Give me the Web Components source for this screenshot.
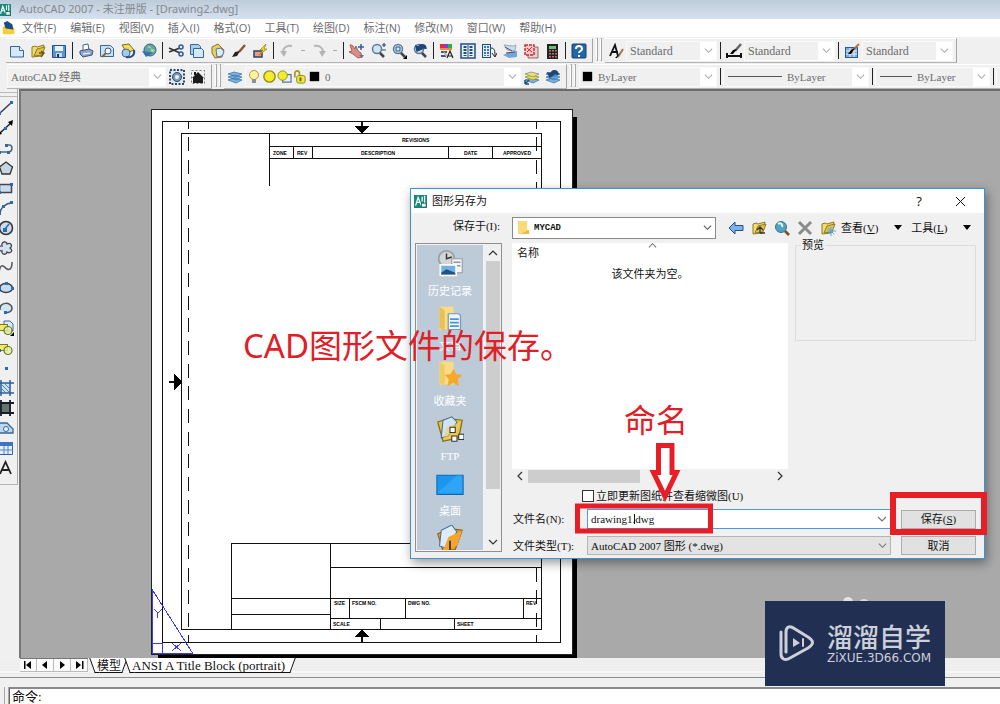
<!DOCTYPE html>
<html lang="zh-CN">
<head>
<meta charset="utf-8">
<title>AutoCAD 2007 - [Drawing2.dwg]</title>
<style>
html, body { margin: 0; height: 100%; }
body { background: #f0f0f0; font: 11px/16px "Open Sans", "Noto Sans CJK SC", sans-serif; overflow: hidden; }
</style>
</head>
<body>
<cad-app></cad-app>
<script>
const SIM = '"Liberation Serif", "Noto Sans CJK SC", serif';

/* Icons on a 16 x 16 grid */
const sheet = '<path d="M1.500 3.500h9l4 4v6.500h-13z" fill="#d5e8f7" stroke="#34689a"/><path d="M10.500 3.500v4h4" fill="#fff" stroke="#34689a"/>';
const folder = '<path d="M2 14V4l3-1 2 1 7-2-1 4-2 7z" fill="#f3dc6e" stroke="#8c7a28"/><path d="M4 13l3-7 8-2-3 8z" fill="#e2c443" stroke="#8c7a28"/>';
const layers = '<path d="M1 11l6-2 8 2-6 3zM1 8l6-2 8 2-6 3zM1 5l6-2 8 2-6 3z" fill="#7fb2dd" stroke="#2f6da6" stroke-width=".7"/>';
const lens = '<circle cx="7" cy="6" r="4.500" fill="#cfe4f5" stroke="#5b7b97" stroke-width="1.500"/><path d="M10 10l4 4" stroke="#444" stroke-width="2.500"/>';
const blocks = '<rect x="1.500" y="4.500" width="8" height="6" fill="#f2ea6a" stroke="#7c7a1c"/><circle cx="10" cy="10.500" r="4" fill="#e9efa0" fill-opacity=".8" stroke="#62782c" stroke-width="1.200"/>';
const I = {
 app: '<rect width="16" height="16" fill="#168a78"/><path d="M2 13L5 3l4 10M10 2v6M13 1v10M3 9h5" stroke="#fff" stroke-width="1.500" fill="none"/><path d="M9 10h6v5H9z" fill="#dff3ef" stroke="#0d4f46"/>',
 doc: '<path d="M1 7l6-4 7 5v6H1z" fill="#f2bd1d"/><path d="M2 2l4-2 6 4 1 8-8-1z" fill="#1e4c86"/><path d="M1 8l13 2v5H1z" fill="#f7cf38"/>',
 new: sheet,
 open: folder + '<path d="M9 10h5M11 8l3 2-3 4" stroke="#6b5a1a" stroke-width="1.500" fill="none"/>',
 save: '<path d="M1.500 2.500h13v12h-13z" fill="#5b97cf" stroke="#1f4f86"/><path d="M4 3h8v5H4z" fill="#e9f3fb"/><path d="M5 10h6v4H5z" fill="#d2dbe4"/><path d="M6 11h2v3H6z" fill="#234"/>',
 print: '<path d="M5 7V2l5-1 1 6" fill="#fff" stroke="#4d6387"/><path d="M2 8l9-2 4 2-1 4-9 2-3-3z" fill="#8fa6d2" stroke="#3f4f7d"/><path d="M5 11l7-1" stroke="#fff"/>',
 preview: '<path d="M1.500 2.500h10l3 3v8h-13z" fill="#c9dff2" stroke="#34689a"/><circle cx="9" cy="8" r="3" fill="#edf6fd" stroke="#456"/><path d="M7 10l-4 4" stroke="#8a6532" stroke-width="2"/>',
 publish: '<path d="M2 2l7-1 5 6-7 3z" fill="#f4dc54" stroke="#7a7020"/><circle cx="6" cy="10" r="4" fill="#a8c8eb" stroke="#386799"/><path d="M6 14c6 1 9-2 8-7" stroke="#284f86" stroke-width="2" fill="none"/>',
 globe: '<circle cx="9" cy="7" r="6" fill="#5fa6a6" stroke="#38677a"/><path d="M6 4c3-2 5 1 4 3s3 3 4 0" fill="#b9d98a"/><path d="M1 8l4 6 7-4-4-1z" fill="#3a6fae"/>',
 cut: '<path d="M1 5l11 5M1 9l11-4" stroke="#333" stroke-width="1.500"/><circle cx="13" cy="4" r="2" fill="none" stroke="#2b5c93" stroke-width="1.500"/><circle cx="13" cy="11" r="2" fill="none" stroke="#2b5c93" stroke-width="1.500"/>',
 copy: '<path d="M1.500 1.500h8l2 2v8h-10z" fill="#a9cdec" stroke="#34689a"/><path d="M4.500 5.500h8l2 2v7h-10z" fill="#d5e8f7" stroke="#34689a"/>',
 paste: '<path d="M2 4l6-3 6 6-2 7-7 1-3-5z" fill="#e9cf63" stroke="#87742a"/><path d="M6 6l5-1 3 4-2 4-5 1z" fill="#dcebf8" stroke="#54779a"/>',
 brush: '<path d="M14 2L8 9" stroke="#8a5a35" stroke-width="2.500"/><path d="M9 8l-3 5-5 1 3-5z" fill="#222"/>',
 blockedit: '<rect x="2" y="8" width="8" height="6" fill="#f39b73" stroke="#24467e" stroke-width="1.500"/><path d="M14 1L8 7h3l-4 5 8-6h-3z" fill="#f6dd28" stroke="#937708" stroke-width=".7"/>',
 undo: '<path d="M4 9c0-5 5-7 9-6" stroke="#b5b5b5" stroke-width="2" fill="none"/><path d="M1 8h7l-3 6z" fill="#b5b5b5"/>',
 redo: '<path d="M3 3c4-1 9 1 9 6" stroke="#b5b5b5" stroke-width="2" fill="none"/><path d="M15 8H8l3 6z" fill="#b5b5b5"/>',
 pan: '<path d="M1 2l2 0 3 4 1-3 2 5 3 2 1 4-4 1-5-4-4-2 3-1z" fill="#d98f88" stroke="#a75e5b"/><path d="M10 12l3 3 2-3z" fill="#5379a8"/><path d="M12 1v6M9 4h6" stroke="#345c94" stroke-width="1.500"/>',
 zoomrt: lens + '<path d="M12 2h4M14 0v4M12 7h4" stroke="#244e80" stroke-width="1.200"/>',
 zoomwin: lens + '<path d="M5 4h4v4H5z" fill="none" stroke="#24598f"/><path d="M16 12v4h-4z"/>',
 zoomprev: lens + '<path d="M14 6c0-5-6-6-8-1M4 3l1 5 5-2z" stroke="#1d4679" stroke-width="1.500" fill="#1d4679"/>',
 props: '<path d="M1 1h4v4H1z" fill="#e62b2b"/><path d="M5 1h4v4H5z" fill="#8a39d8"/><path d="M9 1h4v4H9z" fill="#22b53a"/><path d="M1 5h12v2H1z" fill="#f08a37"/><path d="M2 8h6v2H2zM2 12h5v2H2z" fill="#2b5a9b"/><path d="M4 7l5 6h-3z" fill="#e3a07c"/><path d="M8 15l3-7 3 7M9 13h4" stroke="#222" stroke-width="1.200" fill="none"/>',
 center: '<rect x="1" y="1" width="14" height="14" fill="#eaf3fb" stroke="#1f4c82" stroke-width="1.500"/><path d="M5 3v10M11 3v10" stroke="#1f4c82" stroke-width="3" stroke-dasharray="2 1"/><path d="M8 2v12" stroke="#1f4c82"/>',
 palettes: '<rect x="1.500" y="1.500" width="8" height="13" fill="#e2eef9" stroke="#1f4c82"/><path d="M4 3v10M7 3v10" stroke="#3f74b0" stroke-width="2" stroke-dasharray="2 1"/><path d="M10 5c4 0 4 4 4 8M11 10l3 4 2-4" stroke="#222" fill="none"/>',
 sheetset: '<path d="M2 2l9 1 3-1-1 6-8-1z" fill="#cddbe7" stroke="#7b95ac" stroke-width=".7"/><path d="M1 12l7-3 7-1v6l-8 1z" fill="#74a6cf"/><path d="M3 4l7 4M4 10l9-1" stroke="#547"/>',
 markup: '<path d="M5 4h10v11H5z" fill="#e0d2d0" stroke="#a06660"/><path d="M2 2h9v10H2z" fill="#f8caca" stroke="#c92c30" stroke-width="1.500" stroke-dasharray="3 1"/><path d="M4 9l5-5M4 5l5 4" stroke="#c92c30"/>',
 calc: '<rect x="3" y="1" width="11" height="15" fill="#232323"/><path d="M5 3h7v3H5z" fill="#6fbf7c"/><path d="M6 7v8M9 7v8M12 7v8" stroke="#e88" stroke-width="1.500" stroke-dasharray="1.500 1.500"/>',
 help: '<rect x="1" y="1" width="14" height="14" rx="1" fill="#2467a8" stroke="#153f70"/><path d="M5 6c0-4 6-4 6 0 0 2-3 2-3 4M8 12v2" stroke="#fff" stroke-width="2" fill="none"/>',
 textstyle: '<path d="M2 13L7 2l3 11M4 9h6" stroke="#111" stroke-width="1.800" fill="none"/><path d="M15 6l-5 8" stroke="#b0764a" stroke-width="2"/><path d="M12 10l-3 5-2 0z"/>',
 dimstyle: '<path d="M1 10v5M15 10v5M2 13h12" stroke="#111" stroke-width="2"/><path d="M15 1l-6 7" stroke="#666" stroke-width="2.500"/><path d="M11 6l-4 5-3 0 3-4z"/>',
 tabstyle: '<rect x="1.500" y="4.500" width="12" height="10" fill="#7ca9d8" stroke="#285c96"/><path d="M2 8h11M2 11h11M6 5v9M10 5v9" stroke="#e8f2fb"/><path d="M15 1L9 7" stroke="#b0764a" stroke-width="2"/><path d="M11 5l-4 6-3 0 3-4z"/>',
 gear: '<rect x="1" y="1" width="14" height="14" fill="#dde8f1" stroke="#30485f" stroke-width="2" stroke-dasharray="2 1.500"/><circle cx="8" cy="8" r="4.500" fill="#7d98b4" stroke="#2e4763"/><circle cx="8" cy="8" r="2" fill="#eef4f9"/>',
 home: '<rect x="1.500" y="1.500" width="13" height="13" fill="none" stroke="#777" stroke-dasharray="2 2"/><path d="M2 9l6-6 6 6h-1v5H3V9zM4 3h2v3H4z" fill="#1b1b1b"/>',
 layers: layers,
 layprev: '<path d="M1 11l6-2 8 2-6 3z" fill="#7fb2dd" stroke="#2f6da6" stroke-width=".7"/><path d="M1 8l6-2 8 2-6 3z" fill="#efe04a" stroke="#8f8420" stroke-width=".7"/><path d="M1 5l6-2 8 2-6 3z" fill="#e6dc8a" stroke="#7b8a5a" stroke-width=".7"/><path d="M5 11L1 15M1 15v-4M1 15h4" stroke="#1b4c86" fill="none" stroke-width="1.500"/>',
 laystate: layers + '<path d="M13 6c0-5-6-6-7-1M3 4l2 4 4-3z" stroke="#1d4679" stroke-width="1.500" fill="#1d4679"/>',
 bulb: '<circle cx="8" cy="6" r="4.500" fill="#fdf3a0" stroke="#b9992c"/><path d="M6 10h4v4H6z" fill="#8f8f8f"/>',
 sun: '<circle cx="8" cy="8" r="6" fill="#f3ec2c" stroke="#958c1b" stroke-width="1.500"/>',
 vpsun: '<rect x="6" y="6" width="9" height="8" fill="#eef" stroke="#456a99" stroke-width="1.200"/><circle cx="6" cy="7" r="5" fill="#f3ec2c" stroke="#958c1b"/>',
 lock: '<path d="M3 9V5c0-4 5-4 5 0v3" fill="none" stroke="#a59c16" stroke-width="1.800"/><rect x="5" y="7" width="9" height="8" rx="2" fill="#f1e933" stroke="#8b8415"/><path d="M9 9v4" stroke="#665f10" stroke-width="2"/>',
 line: '<path d="M1 14L14 2" stroke="#345" stroke-width="1.500"/><path d="M0 12h3v3H0zM12 1h3v3h-3z" fill="#2a6ab0"/>',
 xline: '<path d="M1 14L14 2" stroke="#222" stroke-width="1.500"/><path d="M15 0l-1 6-4-4zM0 15l1-5 3 4z"/><path d="M6 7h3v3H6z" fill="#2a6ab0"/>',
 pline: '<path d="M1 12h10c4-1 4-7 0-7H8" fill="none" stroke="#567" stroke-width="1.500"/><path d="M0 11h3v3H0zM7 4h3v3H7zM9 11h3v3H9z" fill="#2a6ab0"/>',
 polygon: '<path d="M8 2l6.500 5-2.500 7H4L1.500 7z" fill="#c4d6e4" stroke="#333" stroke-width="1.300"/>',
 rect: '<path d="M1.500 4.500h12v8h-12z" fill="#c9dcec" stroke="#445" stroke-width="1.500"/><path d="M0 11h3v3H0zM12 3h3v3h-3z" fill="#2a6ab0"/>',
 arc: '<path d="M2 14C2 8 8 3 14 3" fill="none" stroke="#456" stroke-width="1.500"/><path d="M0 12h3v3H0zM4 5h3v3H4zM12 1h3v3h-3z" fill="#2a6ab0"/>',
 circle: '<circle cx="8" cy="8" r="6.500" fill="#cbddea" stroke="#333" stroke-width="1.500"/><path d="M7 9l4-5" stroke="#2a6ab0" stroke-width="1.500"/><path d="M5 8h4v4H5z" fill="#2a6ab0"/>',
 cloud: '<path d="M4 6c-1-5 5-5 5-2 4-2 6 2 3 4 4 3 0 6-3 4-1 4-6 2-5-1-5 0-3-6 0-5z" fill="#d3e3ee" stroke="#445" stroke-width="1.300"/>',
 spline: '<path d="M1 14C2 0 7 8 9 9s5 1 5-7" fill="none" stroke="#556" stroke-width="1.500"/>',
 ellipse: '<ellipse cx="8" cy="8" rx="6.500" ry="4.500" fill="#c6dced" stroke="#345" stroke-width="1.500"/><path d="M0 7h3v3H0zM13 7h3v3h-3zM7 2h3v3H7z" fill="#2a6ab0"/>',
 elarc: '<path d="M2 10C1 1 14 2 14 8c0 4-4 5-7 4" fill="#d6e4ee" stroke="#456" stroke-width="1.500"/><path d="M6 11h3v3H6z" fill="#2a6ab0"/>',
 insert: '<path d="M6 1h6l3 3v7H6z" fill="#dceaf6" stroke="#3d6ba0"/>' + blocks + '<path d="M16 12v4h-4z"/>',
 block: blocks + '<path d="M0 9h3v3H0z" fill="#2a6ab0"/>',
 point: '<path d="M7 7h3v3H7z" fill="#2a6ab0"/>',
 hatch: '<path d="M2 3h11v10H2z" fill="#cfe0ef"/><path d="M3 0v16M12 0v16M0 3h16M0 13h16" stroke="#2b5f98" stroke-width="1.500"/><path d="M4 5l7 7M7 4l5 5M4 9l4 4" stroke="#4a82ba"/>',
 gradient: '<path d="M2 3h11v10H2z" fill="#65756c"/><path d="M3 0v16M12 0v16M0 3h16M0 13h16" stroke="#151d2c" stroke-width="1.800"/>',
 region: '<path d="M1 13V3h8l6 6v4z" fill="#bdd8ee" stroke="#34689a" stroke-width="1.300"/><circle cx="8" cy="9" r="2.500" fill="#eef6fc" stroke="#34689a"/>',
 table: '<path d="M1.500 2.500h13v12h-13z" fill="#e6f0fa" stroke="#2d62a8"/><path d="M1 2h14v4H1z" fill="#3f72c4"/><path d="M1 10h14M6 6v8M10 6v8" stroke="#4f83c4"/>',
 mtext: '<path d="M2 14L7.500 2 13 14M4 10h7" stroke="#222" stroke-width="1.800" fill="none"/>',
 back: '<path d="M1 8l6-6v3.500h8v5H7V14z" fill="#7db2ea" stroke="#23538f"/>',
 up: folder + '<path d="M9 13V8M6 10l3-3 3 3M9 13h5" stroke="#333" stroke-width="1.300" fill="none"/>',
 search: '<circle cx="7" cy="7" r="5.500" fill="#4aa6c4" stroke="#456f8b"/><path d="M4 4c3-2 5 1 4 3" stroke="#e4f6e0" stroke-width="2" fill="none"/><path d="M11 11l4 4" stroke="#7a4e22" stroke-width="2.500"/>',
 del: '<path d="M2 2l12 12M14 2L2 14" stroke="#8b8b8b" stroke-width="3"/>',
 newdir: folder + '<path d="M11 7v9M7 11h9M8 8l6 6M14 8l-6 6" stroke="#5aa3e8"/>',
 dir: '<path d="M2 1h10v10h2v4H2z" fill="#f8da7a"/><path d="M12 11h2v4h-9z" fill="#e9bd4c"/>',
 swatch: '<path d="M3 3h10v10H3z"/>',
 history: '<circle cx="6" cy="5" r="4.500" fill="#d3d5d6" stroke="#9aa0a5"/><path d="M6 2v3l3-1" fill="none" stroke="#333" stroke-width=".8"/><path d="M9 5h6v8H9z" fill="#f3f3f3" stroke="#999" stroke-width=".6"/><path d="M10 7h4M12 9h2" stroke="#89a" stroke-width=".8"/><path d="M2.500 8.500h9v6h-9z" fill="#6fb3e6" stroke="#fff"/><path d="M3 14v-1l3-2 5 2v1z" fill="#27507c"/>',
 docs: '<path d="M2 1h8v13H2z" fill="#f9dc84"/><path d="M2 1l3 2v12l-3-2z" fill="#e9c153"/><path d="M7 5h6l1 1v8H7z" fill="#eef6fc" stroke="#7a97b4" stroke-width=".7"/><path d="M8 8h5M8 10h5M8 12h5" stroke="#4b93d5"/>',
 fav: '<path d="M2 1h8v13H2z" fill="#f9dc84"/><path d="M2 1l3 2v12l-3-2z" fill="#f1cb63"/><path d="M10 5l1.500 3 3.500.500-2.500 2.500.500 4-3-2-3.500 2 .800-4L5 8.500 8.500 8z" fill="#f5a92c"/>',
 ftp: '<path d="M1 4l6-2 8 1-2 10-9 2z" fill="#e9c43c" stroke="#806a20" stroke-width=".7"/><path d="M3 13L4 3l5-2 3 3-5 8z" fill="#cfe4f8" stroke="#47698c" stroke-width=".6"/><path d="M4 14l2-7 8-3-3 9z" fill="#f0d05a" fill-opacity=".6"/><path d="M8 7h3v3H8zM9 12h3v3H9zM13 11h3v3h-3z" fill="#fff" stroke="#333" stroke-width=".6"/>',
 desktop: '<path d="M.500 3h15v11H.500z" fill="#1c97f0" stroke="#0c68b4" stroke-width=".6"/><path d="M1 13L12 3h3v10z" fill="#42b4fb" opacity=".5"/>',
 buzz: '<path d="M1 5l7-3 7 1-4 11-7 1z" fill="#f29b22" stroke="#8a5a14" stroke-width=".6"/><path d="M2 12L3 3l6-3 3 4-7 9z" fill="#dcebf7" stroke="#456f95" stroke-width=".6"/><path d="M4 15l3-8 8-4-3 9z" fill="#f5a52b"/><path d="M8 9v6" stroke="#333"/>',
};
const icon = (n, s = 16) => `<svg width="${s}" height="${s}" viewBox="0 0 16 16" aria-hidden="true">${I[n]}</svg>`;
const chev = (c, w = 10) => `<svg class="chev" width="${w}" height="${w}" viewBox="0 0 10 10" aria-hidden="true"><path d="M1 3l4 4 4-4" fill="none" stroke="${c}" stroke-width="1.200"/></svg>`;

const BASE = '*{box-sizing:border-box}button{font:inherit;color:inherit;background:none;border:0;padding:0;margin:0}svg{display:block;flex:none}';
function define(name, css, html) {
  customElements.define(name, class extends HTMLElement {
    constructor() { super(); this.attachShadow({ mode: 'open' }); }
    connectedCallback() {
      this.shadowRoot.innerHTML = `<style>${BASE}${css}</style>` + (typeof html === 'function' ? html(this) : html);
    }
  });
}

define('cad-tool', `
:host{display:flex;flex:none;width:21px;height:20px}
button{width:100%;height:100%;display:flex;align-items:center;justify-content:center}`,
 el => `<button type="button" aria-label="${el.getAttribute('icon')}">${icon(el.getAttribute('icon'), 16)}</button>`);

define('cad-icon', ':host{display:block;flex:none}', el => icon(el.getAttribute('name'), +el.getAttribute('size') || 16));

define('cad-sep', ':host{display:flex;flex:none;width:6px;height:17px;justify-content:center}i{width:1px;background:#222}', '<i></i>');
define('cad-more', ':host{display:flex;flex:none;width:11px;height:17px;align-items:center;justify-content:center}i{width:4px;height:1px;background:#aaa}', '<i></i>');
define('cad-grip', ':host{display:flex;flex:none;gap:2px;height:23px;width:12px;justify-content:center}i{width:2px;border:1px solid #a8a8a8;border-left-color:#fff}', '<i></i><i></i>');

define('cad-panel', `
:host{display:flex;flex:none;align-items:center;height:25px;border-right:1px solid #a3a3a3;border-bottom:1px solid #b4b4b4;border-top:1px solid #fff}`, '<slot></slot>');

/* Drop-down with an optional picture before its value */
define('cad-combo', `
:host{display:flex;flex:none;height:20px;align-items:center;background:#f0f0f0;border:1px solid #fafafa;color:#6c6c6c;font-family:var(--sim);font-size:12px}
slot{display:flex;align-items:center;flex:none}
select{appearance:none;border:0;background:none;flex:1;min-width:0;height:100%;padding:0 0 0 3px;margin:0;font:inherit;color:inherit;outline:0}
.drop{background:var(--drop,#fff);width:16px;height:100%;display:flex;align-items:center;justify-content:center;pointer-events:none}`,
 el => `<slot></slot><select aria-label="${el.getAttribute('label')}"><option>${el.getAttribute('value')}</option></select><span class="drop">${chev(el.getAttribute('tone') || '#aaa', 9)}</span>`);

define('cad-titlebar', `
:host{display:flex;align-items:center;height:19px;gap:8px;background:linear-gradient(#becbd9,#d5e1ee);color:#84898f}
h1{font:11px/16px "Noto Sans","Noto Sans CJK SC",sans-serif;margin:0;padding-bottom:2px}svg{margin-left:-1px}`,
 `${icon('app', 12)}<h1>AutoCAD 2007 - 未注册版 - [Drawing2.dwg]</h1>`);

define('cad-menubar', `
:host{display:flex;height:18px;align-items:center;background:#fff;color:#6a6a6a;padding-left:2px}
nav{display:flex;gap:14px;margin-left:6px}`,
 icon('doc', 14) + '<nav>' + ['文件(F)', '编辑(E)', '视图(V)', '插入(I)', '格式(O)', '工具(T)', '绘图(D)', '标注(N)', '修改(M)', '窗口(W)', '帮助(H)'].map(t => `<button type="button">${t}</button>`).join('') + '</nav>');

const tools = s => s.split(' ').map(n => n === '|' ? '<cad-sep></cad-sep>' : n === '-' ? '<cad-more></cad-more>' : `<cad-tool icon="${n}"></cad-tool>`).join('');

define('cad-toolbars', `
:host{display:flex;flex-direction:column;gap:1px;padding-top:1px;height:53px;overflow:hidden}
div{display:flex}
.first{padding-left:6px}.second{padding-left:7px}
.std{width:91px}
.ws{width:159px}.lay{width:276px}.col{width:138px}.lt{width:146px}.lw{width:115px}.plot{width:80px}
.ws,.col,.lt,.lw,.lay{font-size:11px}
.rule{height:1px;background:#555;width:54px;margin:0 2px 0 4px}.short{width:32px}
.pair{padding-right:3px}`, `
<div class="first"><cad-panel class="pair">${tools('new open save | print preview publish globe | cut copy paste brush blockedit | undo - redo - | pan zoomrt zoomwin zoomprev | props center palettes sheetset markup calc | help')}</cad-panel>
<cad-grip></cad-grip><cad-panel class="pair">${tools('textstyle')}<cad-combo class="std" label="文字样式" value="Standard"></cad-combo>${tools('| dimstyle')}<cad-combo class="std" label="标注样式" value="Standard"></cad-combo>${tools('| tabstyle')}<cad-combo class="std" label="表格样式" value="Standard"></cad-combo></cad-panel></div>
<div class="second"><cad-panel class="pair"><cad-combo class="ws" label="工作空间" value="AutoCAD 经典"></cad-combo>${tools('gear home')}</cad-panel>
<cad-grip></cad-grip><cad-panel class="pair">${tools('layers')}<cad-combo class="lay" label="图层" value="0"><cad-icon name="bulb" size="16"></cad-icon><cad-icon name="sun" size="15"></cad-icon><cad-icon name="vpsun" size="15"></cad-icon><cad-icon name="lock" size="15"></cad-icon><cad-icon name="swatch" size="15"></cad-icon></cad-combo>${tools('layprev laystate')}</cad-panel>
<cad-grip></cad-grip><cad-panel><cad-combo class="col" label="颜色" value="ByLayer"><cad-icon name="swatch" size="15"></cad-icon></cad-combo>${tools('|')}<cad-combo class="lt" label="线型" value="ByLayer"><i class="rule"></i></cad-combo>${tools('|')}<cad-combo class="lw" label="线宽" value="ByLayer"><i class="rule short"></i></cad-combo>${tools('|')}<cad-combo class="plot" label="打印样式" value=""></cad-combo></cad-panel></div>`);

define('cad-palette', `
:host{display:flex;flex-direction:column;flex:none;width:18px;overflow:hidden;align-self:flex-start;border-right:1px solid #a9a9a9;border-bottom:1px solid #b4b4b4;padding-bottom:6px}
.grip{height:8px;border-bottom:1px solid #bbb;margin-bottom:1px;padding-top:3px}.grip i{display:block;height:1px;background:#bbb}
cad-tool{margin-left:-5px}`,
 '<div class="grip"><i></i></div>' + tools('line xline pline polygon rect arc circle cloud spline ellipse elarc insert block point hatch gradient region table mtext'));

/* Paper-space sheet with its title block, on the grey canvas */
define('cad-canvas', `
:host{display:block;flex:1;min-width:0;background:#a9a9a9;border-left:2px solid #777;border-top:2px solid #6b6b6b;overflow:hidden;position:relative}
svg{position:absolute;left:129px;top:18px}
text{font:bold 5px "Liberation Sans",sans-serif;fill:#000}`, `
<svg width="430" height="550" viewBox="150 109 430 550" shape-rendering="crispEdges">
<path d="M158 117h419v542H158z"/>
<path d="M151.500 109.500h421v545h-421z" fill="#fff" stroke="#222"/>
<g fill="none" stroke="#111">
<path d="M188.500 114.500V643M536.500 114.500V643" stroke-dasharray="14 8.650"/>
<path d="M188.500 110v11M536.500 110v11" stroke="#fff"/>
<path d="M162.500 121.500h398v521h-398zM181.500 133.500h360v496h-360z"/>
<path d="M269.500 186v-53M269.500 146.500h272M269.500 158.500h272M293.500 146v12M312.500 146v12M448.500 146v12M492.500 146v12"/>
<path d="M231.500 629v-86h310M330.500 543v86M330.500 567.500h211M231.500 598.500h310M231.500 614.500h99M330.500 618.500h211M349.500 598v20M405.500 598v20M523.500 598v20M380.500 618v11M454.500 618v11"/>
<path d="M362 121v12M362 630v13M169 382h12" stroke-width="2"/>
</g>
<path d="M354 126h16l-8 7zM354 637h16l-8-7zM174 374l8 8-8 8z"/>
<g fill="none" stroke="#3a3aff"><path d="M152.500 590v63h40zM152.500 643.500h10v10M154 609l4 4 4-4M157.500 613v5M172 643l9 8M181 643l-9 8"/></g>
<text x="402" y="142">REVISIONS</text><text x="273" y="155">ZONE</text><text x="297" y="155">REV</text><text x="361" y="155">DESCRIPTION</text><text x="464" y="155">DATE</text><text x="503" y="155">APPROVED</text>
<text x="334" y="605">SIZE</text><text x="352" y="605">FSCM NO.</text><text x="408" y="605">DWG NO.</text><text x="526" y="605">REV</text><text x="333" y="626">SCALE</text><text x="457" y="626">SHEET</text>
</svg>`);

const nav = d => `<button type="button" aria-label="布局导航"><svg width="10" height="10" viewBox="0 0 10 10">${d}</svg></button>`;
define('cad-tabs', `
:host{display:flex;height:20px;flex:none;border-bottom:1px solid #8b8b8b;background:linear-gradient(#efefef 13px,#fff 14px,#e8e8e8 15px,#efefef 16px);padding-left:20px;font:13px/14px var(--sim)}
.nav{display:flex;margin-right:2px;border-top:1px solid #777;height:14px}.nav button{width:17px;background:#fafafa;border-right:1px solid #bbb;border-bottom:1px solid #bbb;display:flex;align-items:center;justify-content:center}
.tab{position:relative;height:15px;color:#111;z-index:0;padding:0 10px 0 7px;border-top:1px solid #111;white-space:nowrap;margin-left:-2px}
.tab::before,.tab::after{content:"";position:absolute;z-index:-1;top:-1px;bottom:0;background:#fff;border-bottom:1px solid #111}
.tab::before{left:2px;right:20px;border-left:1px solid #111;transform:skewX(20deg)}
.tab::after{right:2px;left:12px;border-right:1px solid #111;transform:skewX(-20deg)}
.model{font-size:12px;padding:0 6px 0 7px;margin-left:0}`, `
<div class="nav">${nav('<path d="M1 1h1.500v8H1zM8 1v8L3 5z"/>')}${nav('<path d="M7 1v8L2 5z"/>')}${nav('<path d="M3 1v8l5-4z"/>')}${nav('<path d="M8 1h1.500v8H8zM2 1v8l5-4z"/>')}</div>
<button type="button" class="tab model">模型</button><button type="button" class="tab">ANSI A Title Block (portrait)</button>`);

define('cad-command', `
:host{display:flex;height:26px;flex:none;padding:9px 0 0 4px;font:13px/16px var(--sim);color:#111}
.g{width:5px;border-left:1px solid #aaa;border-right:1px solid #aaa}
label{display:flex;flex:1;background:#fff;border-top:2px solid #8a8a8a;border-left:1px solid #666;padding-left:2px}
input{border:0;outline:0;flex:1;min-width:0;background:none;font:inherit;padding:0}`,
 '<span class="g"></span><label>命令: <input type="text"></label>');

define('place-item', `
:host{display:block;height:55px;flex:none}
button{width:100%;height:55px;display:flex;flex-direction:column;align-items:center;justify-content:flex-end;color:#fff;font:11px/16px var(--sim);gap:5px;padding-bottom:1px}
span{min-height:16px}`,
 el => `<button type="button">${icon(el.getAttribute('icon'), 28)}<span><slot></slot></span></button>`);

define('save-dialog', `
:host{display:flex;flex-direction:column;width:575px;height:371px;background:#f0f0f0;border:1px solid #3a92d8;box-shadow:2px 4px 10px rgba(0,0,0,.4);font:11px/16px var(--sim);color:#111}
header{display:flex;align-items:center;height:24px;background:#fff;padding:0 16px 0 3px;gap:5px}
h2{font:11px/16px "Open Sans","Noto Sans CJK SC",sans-serif;margin:0;flex:1}
header button{width:16px;height:16px;display:flex;align-items:center;justify-content:center;font:13px/16px "Open Sans",sans-serif}
header button+button{margin-left:20px}
.body{padding:0 8px 0 4px}
.look{display:flex;align-items:center;height:30px;padding-bottom:1px}
.look label{width:85px;text-align:right;margin-right:12px;padding-bottom:4px}
.look cad-combo{width:204px;height:22px;background:#fff;border:1px solid #8a8a8a;font:bold 9px/12px "Liberation Mono",monospace;color:#111;margin-right:8px;padding-left:3px}
.look cad-tool{width:23px}
.menu{display:flex;align-items:center;gap:16px;margin-left:2px;white-space:nowrap}.menu+.menu{margin-left:9px}
.menu::after{content:"";border:4px solid transparent;border-top:5px solid #000;border-bottom:0}
.cols{display:flex;gap:10px}
.places{display:flex;width:87px;height:309px;border:1px solid #8f8f8f}
.list{flex:1;background:#bdcbd9;overflow:hidden;border:1px solid #f4f4f4}
.vs{width:17px;display:flex;flex-direction:column;align-items:center;padding:4px 0}
.vs i{width:14px;height:228px;background:#cdcdcd;margin:3px 0 auto}
.up{transform:rotate(180deg)}
.right{flex:1;min-width:0}
.view{display:flex;gap:7px}
.files{width:276px}
.pane{background:#fff;height:226px;padding:2px 5px;position:relative}
.pane p{margin:0}.pane .empty{text-align:center;padding-top:5px}
.sort{position:absolute;left:136px;top:-2px}
.hs{display:flex;height:14px;align-items:center;padding:0 3px}
.hs i{width:112px;height:13px;background:#cdcdcd;margin:0 auto 0 3px}.lt{transform:rotate(90deg)}.rt{transform:rotate(-90deg)}
fieldset{margin:-6px 0 0;flex:1;height:104px;border:1px solid #dcdcdc;padding:0;min-width:0;border-radius:1px}
legend{padding:0 1px;margin-left:5px}
.chk{display:flex;align-items:center;height:26px;padding-left:70px;gap:2px}
.chk input{appearance:none;width:12px;height:12px;border:1px solid #333;background:#fff;margin:0}
.form{display:grid;grid-template-columns:75px 1fr 75px;row-gap:7px;align-items:center}
.form label{padding-left:1px}
.name{display:flex;position:relative;height:20px;align-items:center;background:#fff;border:1px solid #4a9be0;margin-right:10px}
.name input{flex:1;min-width:0;border:0;outline:0;background:none;padding:0 3px;font:inherit;color:#111}
.caret{position:absolute;left:46px;top:4px;width:1px;height:10px;background:#111}
.name svg{margin-right:3px}
.type{--drop:transparent;margin-right:10px;height:19px;background:#e3e3e3;border:1px solid #b5b5b5;color:#111;font-size:11px}
.form button{height:19px;background:#e1e1e1;border:1px solid #adadad}`, `
<header>${icon('app', 13)}<h2>图形另存为</h2><button type="button" aria-label="帮助">?</button><button type="button" aria-label="关闭"><svg width="11" height="11" viewBox="0 0 11 11"><path d="M1 1l9 9M10 1l-9 9" stroke="#111"/></svg></button></header>
<div class="body">
<div class="look"><label>保存于(I):</label><cad-combo label="保存于" value="MYCAD" tone="#555"><cad-icon name="dir" size="15"></cad-icon></cad-combo>${tools('back up search del newdir')}<button type="button" class="menu"><span>查看(<u>V</u>)</span></button><button type="button" class="menu"><span>工具(<u>L</u>)</span></button></div>
<div class="cols">
<div class="places"><div class="list"><place-item icon="history">历史记录</place-item><place-item icon="docs">文档</place-item><place-item icon="fav">收藏夹</place-item><place-item icon="ftp">FTP</place-item><place-item icon="desktop">桌面</place-item><place-item icon="buzz"></place-item></div><div class="vs"><span class="up">${chev('#333')}</span><i></i>${chev('#333')}</div></div>
<div class="right"><div class="view"><div class="files"><div class="pane"><span class="sort up">${chev('#777', 9)}</span><p>名称</p><p class="empty">该文件夹为空。</p></div><div class="hs"><span class="lt">${chev('#333')}</span><i></i><span class="rt">${chev('#333')}</span></div></div>
<fieldset><legend>预览</legend></fieldset></div>
<div class="chk"><input type="checkbox" id="thumb"><label for="thumb">立即更新图纸并查看缩微图(U)</label></div>
<div class="form"><label for="fn">文件名(N):</label><div class="name"><input id="fn" type="text" value="drawing1.dwg"><span class="caret"></span>${chev('#777')}</div><button type="button">保存(<u>S</u>)</button>
<label>文件类型(T):</label><cad-combo class="type" label="文件类型" value="AutoCAD 2007 图形 (*.dwg)" tone="#777"></cad-combo><button type="button">取消</button></div>
</div></div></div>`);

define('cad-notes', `
:host{position:absolute;left:0;top:0;width:100%;height:100%;pointer-events:none;color:#e02028;font:33px/40px "Noto Sans","Noto Sans CJK SC",sans-serif}
p{margin:0;position:absolute;white-space:nowrap}
.title{left:243px;top:326px}.name{left:624px;top:400px;font-size:32px}
svg{position:absolute;left:570px;top:440px}`, `
<p class="title">CAD图形文件的保存。</p><p class="name">命名</p>
<svg width="420" height="100" viewBox="570 440 420 100" fill="none" stroke="#e81e26">
<path d="M577.500 506h133v25h-133z" stroke-width="5"/><path d="M893 495h91v37h-91z" stroke-width="6"/>
<path d="M658.500 445.500h13.500v27h4.500l-11.500 24-11.500-24h5z" stroke-width="5" fill="#fff"/></svg>`);

define('site-mark', `
:host{display:flex;align-items:center;gap:12px;width:180px;height:85px;background:#212f52;color:#cdd0da;padding:0 0 2px 14px;box-sizing:border-box}
b{display:block;font:500 26px/30px "Noto Sans CJK SC",sans-serif}
span{display:block;font:12px/14px "DejaVu Sans",sans-serif}`, `
<svg width="36" height="36" viewBox="0 0 36 36" fill="none" stroke="#cdd0da" stroke-width="3" stroke-linecap="round" stroke-linejoin="round"><path d="M2 7v22c0 5 4 7 9 4l18-10c6-4 6-7 0-11L16 4c-6-4-9-2-9 3v20"/><path d="M14 13v9l7-4z" fill="#cdd0da" stroke="none"/><path d="M24 14v7" stroke-width="2"/></svg>
<div><b>溜溜自学</b><span>ZiXUE.3D66.COM</span></div>`);

define('cad-app', `
:host{--sim:${SIM};display:flex;flex-direction:column;min-height:100vh;position:relative;z-index:0;background:#f0f0f0;overflow:hidden}
.work{display:flex;flex:1;min-height:0;gap:1px;margin-top:-1px}
save-dialog{position:absolute;left:410px;top:188px}
.dots{position:absolute;left:841px;top:596px}
site-mark{position:absolute;left:765px;top:601px}`, `
<cad-titlebar></cad-titlebar><cad-menubar></cad-menubar><cad-toolbars></cad-toolbars>
<div class="work"><cad-palette></cad-palette><cad-canvas></cad-canvas></div>
<cad-tabs></cad-tabs><cad-command></cad-command>
<save-dialog></save-dialog><cad-notes></cad-notes>
<svg class="dots" width="30" height="10"><circle cx="7" cy="6" r="5" fill="#e2e2e2"/><circle cx="23" cy="8" r="5" fill="#dadada"/></svg><site-mark></site-mark>`);
</script>
</body>
</html>
